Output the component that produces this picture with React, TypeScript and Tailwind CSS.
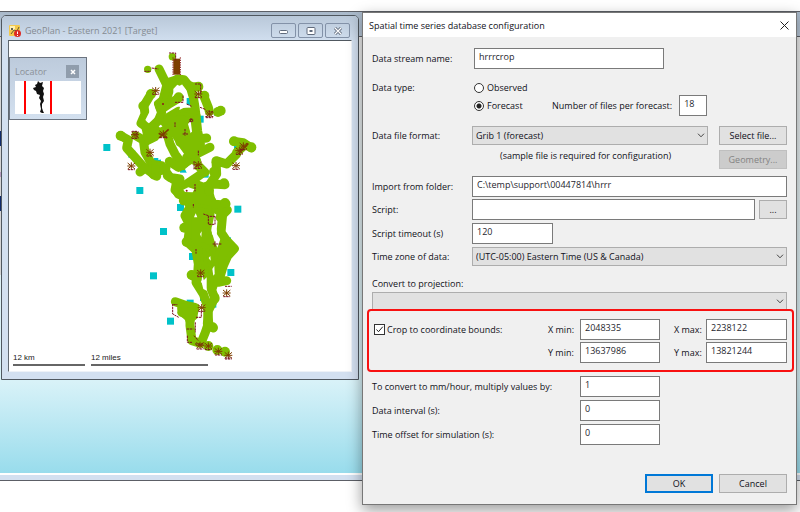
import React from "react";

const LABEL = "text-[#101020]";
const FIELD =
  "h-[21px] min-w-0 rounded-none border border-[#7a7a7a] bg-white px-1 pb-1 text-[#26262e] outline-none";
const BUTTON = "h-[19px] border border-[#adadad] bg-[#e1e1e1] text-center text-[#101020]";

function TextField({ id, value, className }: { id: string; value: string; className: string }) {
  return <input id={id} type="text" defaultValue={value} className={`${FIELD} ${className}`} />;
}

function Combo({ id, value, className = "" }: { id: string; value: string; className?: string }) {
  return (
    <div className={`relative min-w-0 ${className}`}>
      <select
        id={id}
        className="block h-[19px] w-full appearance-none rounded-none border border-[#adadad] bg-[#e1e1e1] pr-4 pl-[3px] text-[#101020] outline-none"
      >
        <option>{value}</option>
      </select>
      <svg viewBox="0 0 8 5" className="pointer-events-none absolute top-[7px] right-[3px] h-[5px] w-2">
        <path d="M1 .7 4 3.8 7 .7" fill="none" stroke="#444" strokeWidth="1" />
      </svg>
    </div>
  );
}

const branches = [
  "M207 75 225 112 236 135 262 105 282 107 300 130",
  "M236 135 230 160 205 180 215 205 205 230",
  "M183 150 162 185 165 210 153 238 178 255 205 230 235 225",
  "M215 195 240 178 265 163",
  "M300 125 310 160 315 190 318 215 323 262 328 285 350 282",
  "M300 128 325 128",
  "M343 160 355 190 358 202",
  "M235 220 265 202 300 205 318 215",
  "M225 235 260 222 295 212",
  "M178 255 200 270 228 258 240 300 255 330 280 365",
  "M228 240 262 262 270 295 300 310 320 330 360 310",
  "M275 235 284 270 310 285 310 320 290 340 330 370 345 385",
  "M290 300 300 330 320 350",
  "M92 275 115 288 110 312 135 340 160 368 190 390 228 372",
  "M137 275 160 288 165 325 182 355 200 385",
  "M185 265 165 295",
  "M150 384 165 372",
  "M195 362 215 365 240 400 270 405",
  "M238 352 265 370 290 355",
  "M190 392 200 397",
  "M260 443 290 420 320 400 340 385",
  "M232 395 260 412 255 438",
  "M265 450 300 465 350 460 360 420 380 390 378 350 410 360 440 330",
  "M300 415 340 430 370 420 405 422",
  "M355 440 320 450",
  "M432 292 460 296 484 312",
  "M440 325 462 305",
  "M290 440 300 490 285 515 300 545 293 595 318 618 325 660 322 705 305 693",
  "M310 460 325 500 310 550 325 600 330 640",
  "M340 465 345 520 335 560 340 600 345 640 350 690 362 730 375 765",
  "M365 470 360 510 350 560 362 600 378 630 375 700 368 730",
  "M280 470 320 475 360 475",
  "M408 480 378 494 398 510 393 565 410 590 433 614 413 636 400 665 385 715 410 710",
  "M412 498 390 520",
  "M362 480 395 482",
  "M318 715 340 750 352 785 356 835 346 865 336 890",
  "M375 760 355 800 352 840 370 852",
  "M256 773 290 785 315 790 308 815 275 795",
  "M275 805 300 815 300 845 306 890 332 898",
  "M290 790 300 830",
];

const masses = [
  "M222 235 262 208 318 215 325 280 340 300 318 348 285 325 260 290z",
  "M160 255 195 242 215 265 200 285 170 300z",
  "M180 355 212 362 215 382 205 398 180 392z",
  "M255 440 310 420 360 425 372 470 345 500 300 495z",
  "M300 480 360 490 352 560 348 610 318 620 300 590z",
  "M340 600 372 620 380 690 370 735 356 720z",
  "M265 783 315 785 318 820 300 835 275 812z",
  "M398 580 430 612 408 650 385 700 378 640z",
  "M225 110 262 98 290 108 250 130 230 190 205 190z",
];

const clearings = [
  "M302 230 294 240 302 268 306 262z",
  "M205 325 216 318 220 345 205 348z",
  "M250 135 262 122 274 128 286 150 270 154 250 150z",
  "M190 175 198 205 182 220 170 232 166 228 180 200z",
  "M272 180 285 175 296 190 280 192 268 198z",
  "M285 375 305 360 315 365 308 384 290 386z",
  "M280 437 295 430 313 436 308 445 285 444z",
  "M312 520 317 508 322 520z",
  "M365 548 374 542 381 562 378 582 366 570z",
  "M367 675 373 665 374 690 370 695z",
  "M335 715 350 700 350 740 340 735z",
  "M356 642 361 636 362 650z",
  "M330 570 335 562 334 580z",
  "M125 300 142 298 148 330 136 312z",
];

const nodes = [
  [247, 38], [173, 76], [384, 204], [392, 200], [266, 160], [380, 355], [405, 477], [343, 155],
  [432, 292], [402, 418], [357, 440], [355, 906], [382, 918], [405, 923], [325, 128], [484, 310],
  [183, 150], [160, 186], [92, 275], [372, 383], [283, 551], [290, 594], [305, 693], [368, 850],
];

const gauges = [
  [40, 300], [139, 429], [192, 342], [432, 306], [261, 480], [210, 552], [180, 685], [231, 821],
  [433, 485], [412, 675], [290, 767], [297, 627], [115, 320], [372, 194], [290, 162], [236, 125],
  [320, 215], [335, 380], [270, 365], [358, 770], [330, 750], [402, 580],
];

const junctions = [
  [197, 140], [325, 150], [358, 210], [135, 272], [220, 270], [180, 325], [124, 366], [460, 306],
  [448, 320], [438, 365], [332, 687], [410, 747], [335, 791], [330, 904], [355, 906], [385, 922],
  [415, 934], [325, 362],
];

const outlines = [
  "M237 27h20v22M163 82h20M185 72 205 75M255 175h24v-22M315 120h17v30M305 225 297 235",
  "M346 218h24M330 190 348 197M370 205 350 200M315 420v22M290 180 305 187M325 320v14",
  "M300 225h8v8h-8zM255 235v14M285 255v20M278 270h16M312 352v24M126 262h15v20",
  "M375 517v24h-20v-24zM368 600h28M375 592v16M318 615v14M310 480v10M340 510 355 515",
  "M405 727h20M248 780v30l18 10M250 782h12M318 820h16v-18M292 875v20h16M316 835v30M290 855h20",
  "M312 875 325 890M315 900h28M405 942h20",
];

function NetworkMap() {
  return (
    <svg viewBox="0 0 540 960" className="absolute top-[3px] left-[81px] h-[320px] w-[180px]">
      <g fill="#00c2c9">
        {gauges.map(([x, y]) => (
          <rect key={`${x}-${y}`} x={x} y={y} width="21" height="21" />
        ))}
      </g>
      <g fill="none" stroke="#7fbf00" strokeWidth="27" strokeLinecap="round" strokeLinejoin="round">
        {branches.map((d) => (
          <path key={d} d={d} />
        ))}
      </g>
      <g fill="#7fbf00" stroke="#7fbf00" strokeWidth="10" strokeLinejoin="round">
        {masses.map((d) => (
          <path key={d} d={d} />
        ))}
      </g>
      <g fill="#fff">
        {clearings.map((d) => (
          <path key={d} d={d} />
        ))}
      </g>
      <g fill="#7fbf00">
        {nodes.map(([x, y]) => (
          <circle key={`${x}-${y}`} cx={x} cy={y} r={y < 80 ? 11 : 15} />
        ))}
      </g>
      <path d="M260 44v48" stroke="#7d3f00" strokeWidth="20" />
      <path d="M249 40v54M271 40v54" stroke="#8b1a1a" strokeWidth="3" strokeDasharray="4 3" />
      <g stroke="#7d3f00" strokeWidth="3" fill="none">
        {junctions.map(([x, y]) => (
          <path
            key={`${x}-${y}`}
            d={`M${x - 11} ${y - 9}l22 18M${x - 11} ${y + 9}l22-18M${x} ${y - 11}v22M${x - 12} ${y}h24`}
          />
        ))}
        <path d="M207 282 236 256M206 268l26 14M445 330l30-32" strokeWidth="5" />
      </g>
      <g stroke="#7b1020" strokeWidth="3" fill="none" strokeDasharray="7 2">
        {outlines.map((d) => (
          <path key={d} d={d} />
        ))}
        {junctions.map(([x, y]) => (
          <path key={`${x}-${y}`} d={`M${x - 10} ${y + 11}h20`} />
        ))}
      </g>
      <g fill="#8b1a1a">
        <circle cx="219" cy="180" r="3" />
        <circle cx="290" cy="440" r="3" />
        <circle cx="320" cy="366" r="3" />
      </g>
    </svg>
  );
}

function Locator() {
  return (
    <section className="absolute top-4 left-0 w-[78px] border border-[#6c7480] bg-gradient-to-b from-[#bdcbdc] to-[#d3e0ef] px-[5px] pt-[7px] pb-[5px]">
      <div className="mb-[3px] flex h-[13px] items-center justify-between pr-[2px]">
        <h2 className="text-[#8b9097]">Locator</h2>
        <button type="button" aria-label="Close locator" className="grid h-[13px] w-[13px] place-items-center bg-[#909dac]">
          <svg viewBox="0 0 6 6" className="h-[6px] w-[6px]">
            <path d="m1 1 4 4M5 1 1 5" stroke="#fff" strokeWidth="1.5" />
          </svg>
        </button>
      </div>
      <svg viewBox="0 0 66 33" className="block h-[33px] w-full bg-white">
        <path d="M10 0v33M36 0v33" stroke="#f00" strokeWidth="2" />
        <path
          d="m23 0 2 2 3-1-1 4 2 2-1 3 1 3-1 3 1 4-2 3v4l1 3 1 2h-2l-2-1 1-3-1-5 1-3-2-3 1-3-3-1-1-3-2-1-1-2 3-1-1-2 2-1z"
          fill="#111"
        />
      </svg>
    </section>
  );
}

const CAPTION = "grid h-[15px] w-[25px] place-items-center rounded-[2px] border border-[#8392a8]";

function GeoPlanWindow() {
  return (
    <section className="absolute top-[15px] left-[1px] w-[358px] rounded-t-[5px] border border-[#505860] bg-[#d3e0f0] px-[6px] pb-[7px]">
      <header className="-mx-[6px] flex h-6 items-center rounded-t-[4px] bg-gradient-to-b from-[#b9c8d9] to-[#d0deee] pt-[5px] pr-[8px] pl-[7px]">
        <svg viewBox="0 0 12 12" className="mr-1 h-3 w-3">
          <rect width="11" height="11" rx="1" fill="#f4c94c" />
          <path d="M1 1h5v4H1z" fill="#fff0b0" />
          <path d="M2 9 5 5l3 1 2-4" fill="none" stroke="#685b35" />
          <circle cx="3" cy="4" r="1" fill="#333" />
          <circle cx="8.5" cy="8.5" r="3.5" fill="#dc2b24" />
          <path d="M8.5 6.500v2.500M8.5 10v1" stroke="#fff" />
        </svg>
        <h1 className="flex-1 whitespace-nowrap text-[#858b92]">GeoPlan - Eastern 2021 [Target]</h1>
        <div className="flex gap-[2px]">
          <button type="button" aria-label="Minimize" className={CAPTION}>
            <svg viewBox="0 0 10 8" className="h-2 w-[10px]">
              <rect x=".5" y="3.5" width="8" height="3" rx="1" fill="#fff" stroke="#606b7c" />
            </svg>
          </button>
          <button type="button" aria-label="Maximize" className={CAPTION}>
            <svg viewBox="0 0 10 8" className="h-2 w-[10px]">
              <rect x="1" y=".5" width="8" height="7" rx="1" fill="#fff" stroke="#606b7c" />
              <path d="M3.5 4h3" stroke="#606b7c" strokeWidth="2" />
            </svg>
          </button>
          <button type="button" aria-label="Close map" className={CAPTION}>
            <svg viewBox="0 0 10 8" className="h-2 w-[10px]">
              <path d="m2 1 6 6M8 1 2 7" stroke="#606b7c" strokeWidth="3" />
              <path d="m2 1 6 6M8 1 2 7" stroke="#fff" strokeWidth="1.2" />
            </svg>
          </button>
        </div>
      </header>
      <div className="relative flex h-[332px] items-end border border-t-[#505860] border-r-[#eef2f7] border-b-[#eef2f7] border-l-[#606870] bg-white pb-[5px] pl-1 font-['Liberation_Sans',sans-serif] text-[8px] leading-3 text-[#202020]">
        <NetworkMap />
        <div className="w-[72px] border-b-2 border-[#666]">12 km</div>
        <div className="ml-[6px] w-[117px] border-b-2 border-[#666]">12 miles</div>
        <div className="absolute top-0 left-0 font-['Open_Sans',sans-serif] text-[9px] leading-[13px]">
          <Locator />
        </div>
      </div>
    </section>
  );
}

const ROW = "grid grid-cols-[100px_minmax(0,1fr)] items-center";

function ConfigurationDialog() {
  return (
    <section
      role="dialog"
      aria-labelledby="dialog-title"
      className="absolute top-3 right-[3px] left-[362px] border border-[#777] bg-[#f0f0f0] shadow-[0_5px_14px_rgba(0,0,0,0.4)]"
    >
      <header className="flex h-6 items-center justify-between bg-white pr-[7px] pl-[6px]">
        <h2 id="dialog-title" className="text-[#101020]">Spatial time series database configuration</h2>
        <button type="button" aria-label="Close">
          <svg viewBox="0 0 9 9" className="h-[9px] w-[9px]">
            <path d="m.5.5 8 8M8.5.5l-8 8" stroke="#222" strokeWidth="1" />
          </svg>
        </button>
      </header>
      <form className={`px-[9px] pt-[11px] pb-[11px] ${LABEL}`}>
        <div className={ROW}>
          <label htmlFor="stream">Data stream name:</label>
          <TextField id="stream" value="hrrrcrop" className="ml-[2px] w-[190px]" />
        </div>

        <div role="radiogroup" aria-labelledby="data-type" className="mt-[11px]">
          <div className={`${ROW} h-[15px]`}>
            <span id="data-type">Data type:</span>
            <label className="ml-[2px] flex items-center gap-[3px]">
              <input type="radio" name="type" className="h-[10px] w-[10px] appearance-none rounded-full border border-[#333] bg-white" />
              Observed
            </label>
          </div>
          <div className={ROW}>
            <label className="col-start-2 row-start-1 ml-[2px] flex items-center gap-[3px]">
              <input
                type="radio"
                name="type"
                defaultChecked
                className="h-[10px] w-[10px] appearance-none rounded-full border border-[#333] bg-[radial-gradient(circle,#222_0_2px,#fff_3px)]"
              />
              Forecast
            </label>
            <div className="col-start-2 row-start-1 ml-20 flex items-center gap-[7px]">
              <label htmlFor="files">Number of files per forecast:</label>
              <TextField id="files" value="18" className="w-7" />
            </div>
          </div>
        </div>

        <div className={`${ROW} mt-[10px]`}>
          <label htmlFor="format">Data file format:</label>
          <div className="flex gap-[11px]">
            <Combo id="format" value="Grib 1 (forecast)" className="flex-1" />
            <button type="button" className={`${BUTTON} w-[68px]`}>Select file...</button>
          </div>
        </div>
        <div className="mt-[5px] flex h-[19px] items-start justify-between pl-[128px]">
          <span className="leading-[11px]">(sample file is required for configuration)</span>
          <button type="button" disabled className="h-[19px] w-[68px] border border-[#bfbfbf] bg-[#cccccc] text-[#838383]">
            Geometry...
          </button>
        </div>

        <div className={`${ROW} mt-[7px]`}>
          <label htmlFor="folder">Import from folder:</label>
          <TextField id="folder" value="C:\temp\support\00447814\hrrr" className="w-full" />
        </div>
        <div className={`${ROW} mt-[2px]`}>
          <label htmlFor="script">Script:</label>
          <div className="flex items-center gap-1">
            <TextField id="script" value="" className="flex-1" />
            <button type="button" aria-label="Browse for script" className={`${BUTTON} w-7`}>...</button>
          </div>
        </div>
        <div className={`${ROW} mt-[3px]`}>
          <label htmlFor="timeout">Script timeout (s)</label>
          <TextField id="timeout" value="120" className="w-[81px]" />
        </div>
        <div className={`${ROW} mt-[3px]`}>
          <label htmlFor="zone">Time zone of data:</label>
          <Combo id="zone" value="(UTC-05:00) Eastern Time (US & Canada)" />
        </div>

        <label htmlFor="projection" className="mt-[10px] block h-4 leading-4">Convert to projection:</label>
        <Combo id="projection" value="" />

        <fieldset className="relative -mt-[2px] -mr-[7px] -ml-[5px] grid grid-cols-[1fr_32px_80px_46px_81px] items-center gap-y-[2px] rounded-[4px] border-2 border-[#f81111] bg-[#f0f0f0] pt-2 pr-[5px] pb-[7px] pl-[5px]">
          <label className="flex items-center gap-[2px]">
            <span className="relative grid h-[11px] w-[11px]">
              <input type="checkbox" defaultChecked className="h-[11px] w-[11px] appearance-none border border-[#333] bg-white" />
              <svg viewBox="0 0 11 11" className="pointer-events-none absolute inset-0 h-[11px] w-[11px]">
                <path d="m2.5 5.5 2 2.2 4.3-5" fill="none" stroke="#222" />
              </svg>
            </span>
            Crop to coordinate bounds:
          </label>
          <label htmlFor="xmin" className="whitespace-nowrap">X min:</label>
          <TextField id="xmin" value="2048335" className="w-full" />
          <label htmlFor="xmax" className="pl-[14px] whitespace-nowrap">X max:</label>
          <TextField id="xmax" value="2238122" className="w-full" />
          <label htmlFor="ymin" className="col-start-2 whitespace-nowrap">Y min:</label>
          <TextField id="ymin" value="13637986" className="w-full" />
          <label htmlFor="ymax" className="pl-[14px] whitespace-nowrap">Y max:</label>
          <TextField id="ymax" value="13821244" className="w-full" />
        </fieldset>

        <div className="mt-1 grid grid-cols-[208px_80px] items-center gap-y-[3px]">
          <label htmlFor="factor">To convert to mm/hour, multiply values by:</label>
          <TextField id="factor" value="1" className="w-full" />
          <label htmlFor="interval">Data interval (s):</label>
          <TextField id="interval" value="0" className="w-full" />
          <label htmlFor="offset">Time offset for simulation (s):</label>
          <TextField id="offset" value="0" className="w-full" />
        </div>

        <div className="mt-[29px] flex justify-end gap-[6px]">
          <button type="button" className="h-[19px] w-[68px] border-2 border-[#0078d7] bg-[#e1e1e1]">OK</button>
          <button type="button" className={`${BUTTON} w-[68px]`}>Cancel</button>
        </div>
      </form>
    </section>
  );
}

export default function App() {
  return (
    <main className="relative min-h-screen overflow-hidden bg-white pt-[11px] font-['Open_Sans',sans-serif] text-[9px] leading-[13px]">
      <div className="border-y border-[#5c5f66] bg-[#d3e0f0] pb-[5px]">
        <div className="h-6 bg-gradient-to-b from-[#a9b9ca] to-[#bccbdc]" />
        <div className="h-[439px] border-t border-b-2 border-t-[#5c5f66] border-b-white bg-gradient-to-b from-[#eeeeee] via-[#d8f2f8] via-79% to-[#98dcec]">
          <div className="flex w-[2px] flex-col bg-[#d5d5d5] pt-[94px] pb-16">
            <span className="h-[15px] bg-[#102a6b]" />
            <span className="mt-[26px] h-[5px] bg-[#b79bc0]" />
            <span className="mt-[19px] h-[15px] bg-[#102a6b]" />
          </div>
        </div>
      </div>
      <GeoPlanWindow />
      <ConfigurationDialog />
    </main>
  );
}
